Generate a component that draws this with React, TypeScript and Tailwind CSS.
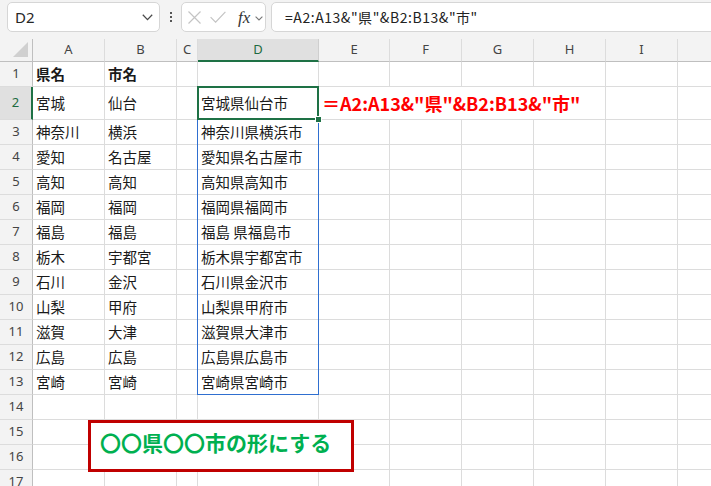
import React from "react";

const A = ["県名", "宮城", "神奈川", "愛知", "高知", "福岡", "福島", "栃木", "石川", "山梨", "滋賀", "広島", "宮崎"];
const B = ["市名", "仙台", "横浜", "名古屋", "高知", "福岡", "福島", "宇都宮", "金沢", "甲府", "大津", "広島", "宮崎"];
const COLS = ["A", "B", "C", "D", "E", "F", "G", "H", "I", ""];

const cjk = "font-['Noto_Sans_CJK_JP','Noto_Sans',sans-serif]";

function Chevron() {
  return (
    <svg width="11" height="7" viewBox="0 0 11 7" fill="none">
      <path d="M0.8 0.8 L5.5 5.6 L10.2 0.8" stroke="#4a4a4a" strokeWidth="1.3" />
    </svg>
  );
}

function TopBar() {
  return (
    <div className="h-[39px] bg-[#f3f3f3] flex items-start pt-[2px]">
      <div className="shrink-0 ml-[7px] w-[153px] h-[30px] bg-white border border-[#d6d6d6] rounded-[5px] flex items-center justify-between pl-[7px] pr-[6px]">
        <span className="font-['Noto_Sans',sans-serif] text-[15px] text-[#262626]">D2</span>
        <Chevron />
      </div>
      <div className="shrink-0 w-[21px] h-[30px] flex flex-col items-center justify-center gap-[2px]">
        <div className="w-[2px] h-[2px] bg-[#555]" />
        <div className="w-[2px] h-[2px] bg-[#555]" />
        <div className="w-[2px] h-[2px] bg-[#555]" />
      </div>
      <div className="shrink-0 w-[85px] h-[30px] bg-white border border-[#d6d6d6] rounded-[5px] flex items-center pl-[6px]">
        <svg width="13" height="13" viewBox="0 0 13 13" fill="none">
          <path d="M0.5 0.5 L12.5 12.5 M12.5 0.5 L0.5 12.5" stroke="#c4c4c4" strokeWidth="1.2" />
        </svg>
        <svg className="ml-[9px]" width="16" height="12" viewBox="0 0 16 12" fill="none">
          <path d="M0.6 6.2 L5.6 11.2 L15.4 0.8" stroke="#c4c4c4" strokeWidth="1.2" />
        </svg>
        <span className="ml-[12px] font-['Liberation_Serif',serif] italic text-[17px] leading-none text-[#333]">fx</span>
        <span className="ml-[5px] mt-[2px]">
          <svg width="8" height="5" viewBox="0 0 8 5" fill="none">
            <path d="M0.6 0.6 L4 4 L7.4 0.6" stroke="#777" strokeWidth="1.1" />
          </svg>
        </span>
      </div>
      <div className="shrink-0 ml-[5px] w-[460px] h-[30px] bg-white border border-[#d6d6d6] rounded-[5px] flex items-center pl-[13px]">
        <span className={`${cjk} text-[14px] tracking-[0.55px] text-[#222]`}>=A2:A13&amp;"県"&amp;B2:B13&amp;"市"</span>
      </div>
    </div>
  );
}

function Cell({
  children,
  className = "",
}: {
  children?: React.ReactNode;
  className?: string;
}) {
  return (
    <div
      className={`border-r border-b border-[#dcdcdc] flex items-center pl-[3px] whitespace-nowrap overflow-visible ${cjk} text-[14.5px] text-[#1a1a1a] ${className}`}
    >
      {children}
    </div>
  );
}

function Grid() {
  const rows: React.ReactNode[] = [];
  rows.push(
    <div key="corner" className="bg-[#f3f3f3] border-r border-b border-[#bfbfbf] relative">
      <svg className="absolute right-[4px] bottom-[4px]" width="15" height="15" viewBox="0 0 15 15">
        <path d="M15 0 L15 15 L0 15 Z" fill="#d0d0d0" />
      </svg>
    </div>
  );
  COLS.forEach((c, idx) => {
    const active = c === "D";
    rows.push(
      <div
        key={"h" + idx}
        className={`flex items-center justify-center font-['Noto_Sans',sans-serif] text-[13px] ${
          active
            ? "bg-[#e0e0e0] text-[#1e6b41] border-b-2 border-b-[#1e7145] border-r border-r-[#cfcfcf]"
            : "bg-[#f3f3f3] text-[#444] border-b border-b-[#bfbfbf] border-r border-r-[#dcdcdc]"
        }`}
      >
        {c}
      </div>
    );
  });

  for (let r = 1; r <= 17; r++) {
    const activeRow = r === 2;
    rows.push(
      <div
        key={"r" + r}
        className={`flex items-center justify-center font-['Noto_Sans',sans-serif] text-[13px] border-b border-b-[#dcdcdc] ${
          activeRow
            ? "bg-[#e0e0e0] text-[#1e6b41] border-r-2 border-r-[#1e7145]"
            : "bg-[#f3f3f3] text-[#444] border-r border-r-[#bfbfbf]"
        }`}
      >
        {r}
      </div>
    );
    const i = r - 1;
    const hasData = i <= 12;
    const bold = r === 1 ? "font-bold" : "";
    rows.push(
      <Cell key={"a" + r} className={bold}>
        {hasData ? A[i] : null}
      </Cell>
    );
    rows.push(
      <Cell key={"b" + r} className={bold}>
        {hasData ? B[i] : null}
      </Cell>
    );
    rows.push(<Cell key={"c" + r} />);
    let d: string | null = null;
    if (r >= 2 && r <= 13) {
      d = A[i] + (A[i] === "福島" ? " " : "") + "県" + B[i] + "市";
    }
    rows.push(
      <Cell key={"d" + r} className={r === 2 ? "relative" : ""}>
        {d}
        {r === 2 && (
          <>
            <div className="absolute left-[-1px] top-[-1px] right-[-1px] bottom-[-1px] border-2 border-[#1e7145]" />
            <div className="absolute right-[-4px] bottom-[-4px] w-[7px] h-[7px] bg-[#1e7145] border border-white" />
          </>
        )}
      </Cell>
    );
    if (r === 2) {
      rows.push(
        <Cell
          key={"e" + r}
          className="col-span-4 font-['Liberation_Sans','Noto_Sans_CJK_JP',sans-serif] font-bold text-[18px] text-[#ff0000] pl-[3px]"
        >
          ＝A2:A13&amp;"県"&amp;B2:B13&amp;"市"
        </Cell>
      );
      rows.push(<Cell key={"i" + r} />);
      rows.push(<Cell key={"j" + r} />);
    } else {
      ["e", "f", "g", "h", "i", "j"].forEach((k) => rows.push(<Cell key={k + r} />));
    }
  }

  return (
    <div className="relative grid grid-cols-[33px_72px_72px_21px_121px_71px_72px_72px_72px_72px_72px] grid-rows-[23px_25px_33px_repeat(15,25px)] bg-white">
      <div className="absolute left-[197px] top-[48px] w-[122px] h-[308px] border border-[#2f6fd0] pointer-events-none" />
      {rows}
    </div>
  );
}

export default function App() {
  return (
    <div className="w-[711px] h-[486px] overflow-hidden bg-white relative">
      <TopBar />
      <Grid />
      <div className="absolute left-[88px] top-[420px] w-[266px] h-[52px] border-[3px] border-[#c00000] bg-white flex items-center pl-[9px] pb-[6px]">
        <span className={`${cjk} font-bold text-[21px] text-[#00b050] whitespace-nowrap`}>〇〇県〇〇市の形にする</span>
      </div>
    </div>
  );
}
